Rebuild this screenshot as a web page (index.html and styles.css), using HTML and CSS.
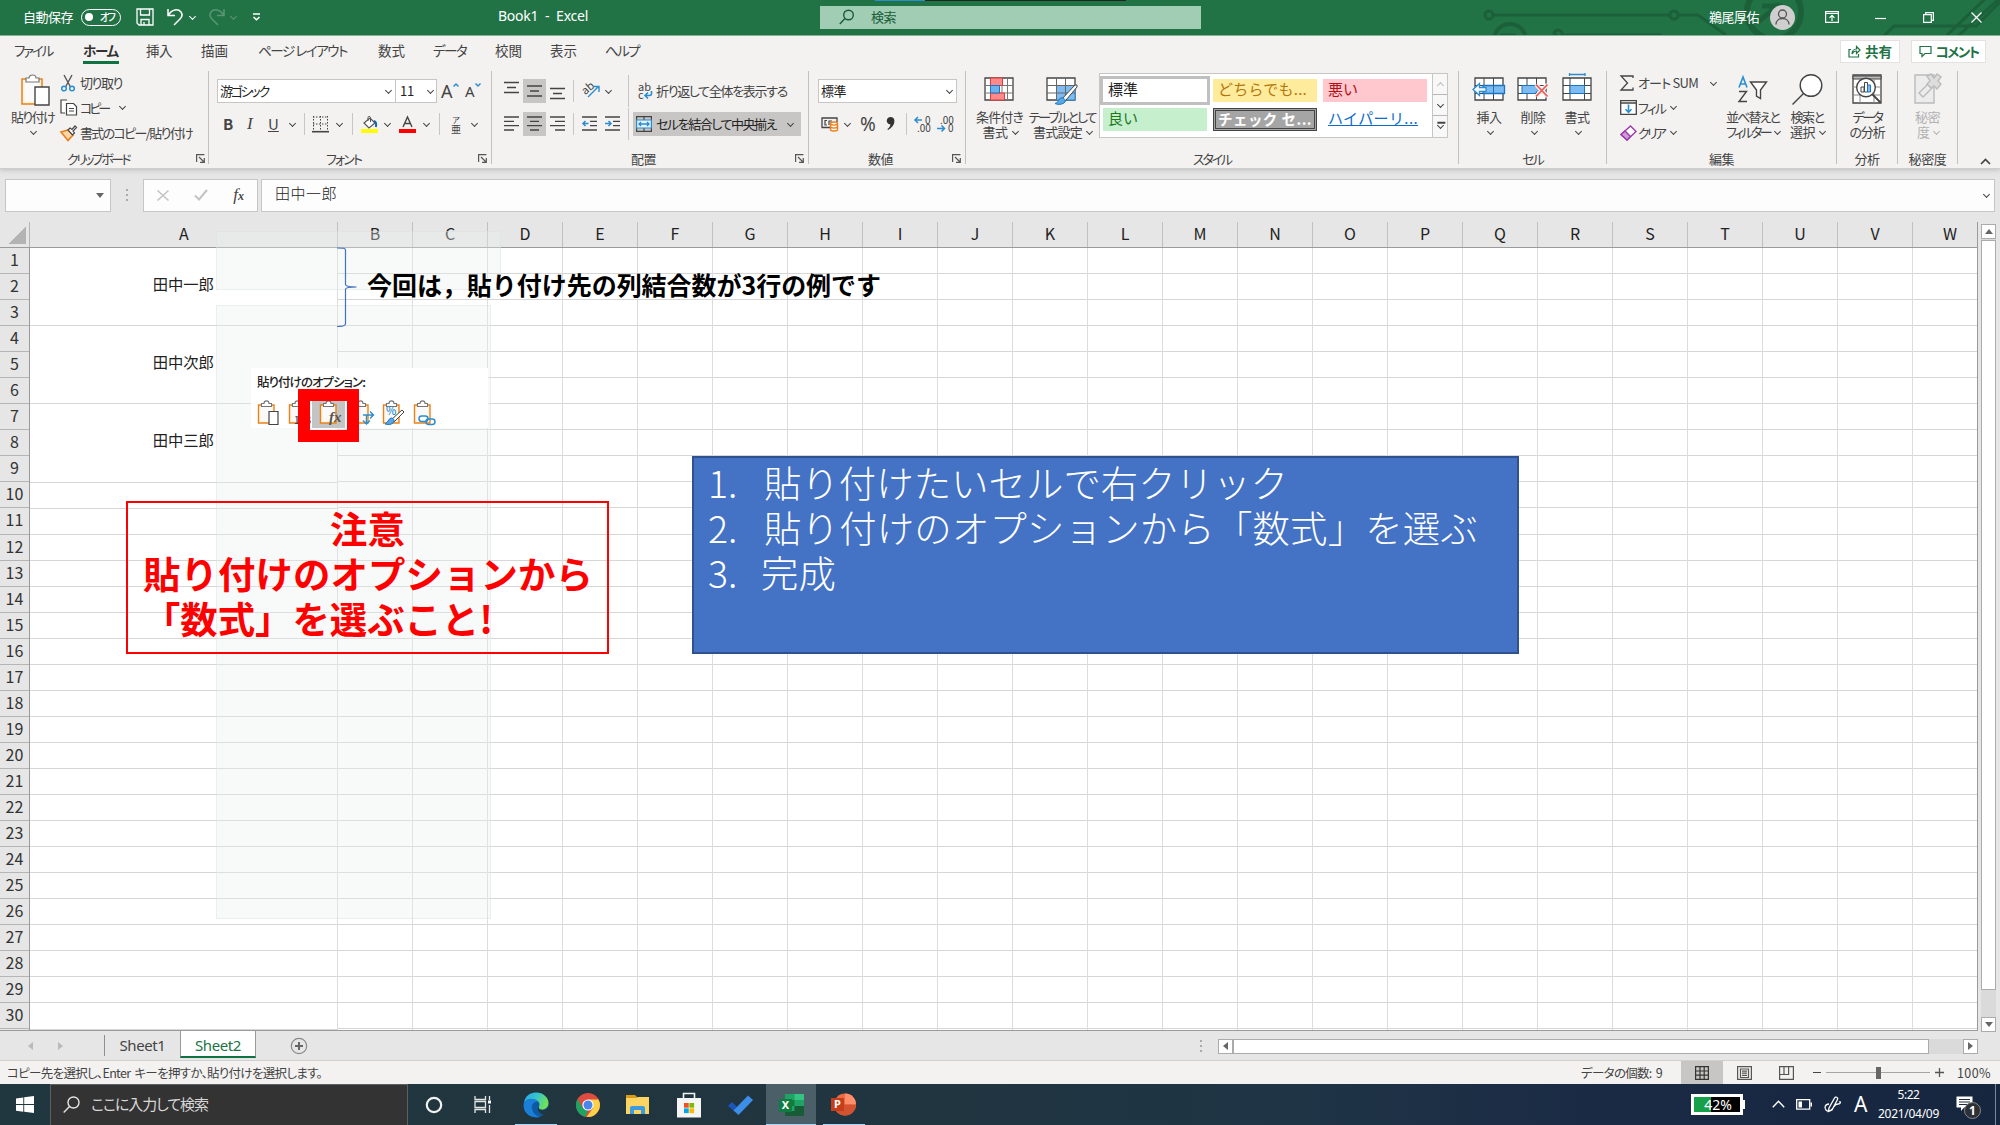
FILE: index.html
```html
<!DOCTYPE html>
<html lang="ja">
<head>
<meta charset="utf-8">
<title>Book1 - Excel</title>
<link rel="stylesheet" href="styles.css">
</head>
<body>
<header class="title">
  <svg class="circuit" width="560" height="35" viewBox="0 0 560 35" fill="none" stroke="#1c6039" stroke-width="3"><circle cx="49" cy="15" r="4"/><path d="M53 15H230M238 15h20l28 20M118 35h-3"/><circle cx="234" cy="15" r="4"/><circle cx="118" cy="34" r="4"/><path d="M122 35h100"/><circle cx="70" cy="40" r="16" stroke-width="4"/><path d="M60 35h16"/><circle cx="334" cy="12" r="27" stroke-width="6"/><path d="M318 22l22-18M322 6h18v14" stroke-width="5"/><path d="M444 36l10-10h82l26-26M506 36l40-38M518 36l42-38"/></svg>
  <span data-w="50">自動保存</span>
  <span class="toggle"><i></i><b data-w="14">オフ</b></span>
  <svg width="18" height="18" viewBox="0 0 18 18" fill="none" stroke="#fff" stroke-width="1.3"><path d="M1 1h16v16H3l-2-2zM4.500 1v6h9V1M5 17v-5.500h8V17M8 17v-3"/></svg>
  <svg width="17" height="18" viewBox="0 0 17 18" fill="none" stroke="#fff" stroke-width="1.5"><path d="M1 1v6.500h7M1.500 7C5 1 11 .5 14 4c2 3 1 5-1 7l-6 6"/></svg>
  <i class="chev"></i>
  <svg class="dim" width="17" height="18" viewBox="0 0 17 18" fill="none" stroke="#fff" stroke-width="1.500"><path d="M16 1v6.500H9M15.500 7C12 1 6 .5 3 4c-2 3-1 5 1 7l6 6"/></svg>
  <i class="chev dim"></i>
  <svg width="9" height="8" viewBox="0 0 9 8" fill="none" stroke="#fff" stroke-width="1.500"><path d="M1 1h7M1.500 4l3 2.700L7.500 4"/></svg>
  <span class="doc" data-w="90">Book1&nbsp; -&nbsp; Excel</span>
  <div class="search"><svg width="16" height="16" viewBox="0 0 16 16" fill="none" stroke="#1b5c38" stroke-width="1.400"><circle cx="9.500" cy="6" r="4.800"/><path d="M6 9.500L.8 15"/></svg><span data-w="25">検索</span></div>
  <span data-w="50">鵜尾厚佑</span>
  <svg width="25" height="25" viewBox="0 0 25 25" fill="none" stroke="#555" stroke-width="1.300"><circle cx="12.500" cy="12.500" r="12.500" fill="#cfcfcf" stroke="none"/><circle cx="12.500" cy="9" r="4"/><path d="M6 19.500c0-8 13-8 13 0"/></svg>
  <svg width="14" height="12" viewBox="0 0 14 12" fill="none" stroke="#fff" stroke-width="1.200"><path d="M.6.600h12.800v10.800H.6zM.6 2.500h12.800M7 10V4.500M4.500 6.800L7 4.300l2.500 2.500"/></svg>
  <svg width="11" height="11" viewBox="0 0 11 11" stroke="#fff" stroke-width="1.200"><path d="M0 6.500h11"/></svg>
  <svg width="11" height="11" viewBox="0 0 11 11" fill="none" stroke="#fff" stroke-width="1.200"><path d="M.6 2.700h7.700v7.700H.6zM2.700 2.700V.6h7.700v7.700H8.300"/></svg>
  <svg width="11" height="11" viewBox="0 0 11 11" stroke="#fff" stroke-width="1.300"><path d="M.5.500l10 10M10.500.500l-10 10"/></svg>
</header>

<section class="ribbon">
  <nav class="tabs">
    <span data-w="38">ファイル</span><b data-w="35">ホーム</b><span data-w="26">挿入</span><span data-w="27">描画</span><span data-w="89">ページ レイアウト</span><span data-w="27">数式</span><span data-w="33">データ</span><span data-w="27">校閲</span><span data-w="27">表示</span><span data-w="34">ヘルプ</span>
    <div class="action share"><svg width="13" height="13" viewBox="0 0 13 13" fill="none" stroke="#217346" stroke-width="1.200"><path d="M3 4.500H1V12h9.500V9M4 9c0-3 2-5 4.500-5V1.500L12 5 8.500 8.500V6C6.500 6 5 7 4 9z"/></svg><b data-w="27">共有</b></div>
    <div class="action"><svg width="13" height="13" viewBox="0 0 13 13" fill="none" stroke="#217346" stroke-width="1.200"><path d="M1 1.500h11v7H6l-3 3v-3H1z"/></svg><b data-w="43">コメント</b></div>
  </nav>
  <div class="groups">
    <div class="group g-clip">
      <div class="body">
        <div class="big"><svg width="30" height="33" viewBox="0 0 30 33" fill="none"><path d="M2 5h20v25H2z" fill="#fff2d6" stroke="#e8821e" stroke-width="1.500"/><path d="M4.500 7.500h15v20h-15z" fill="#fafafa"/><path d="M6 8V4h3c0-4 7-4 7 0h3v4z" fill="#fff" stroke="#767676" stroke-width="1.200"/><path d="M15 13h14v18H15z" fill="#fff" stroke="#444" stroke-width="1.400"/></svg><span data-w="43">貼り付け</span><i class="chev"></i></div>
        <div class="stack clip-stack">
          <div><svg width="16" height="17" viewBox="0 0 16 17" fill="none"><path d="M4 0l6.500 12M12 0L5.500 12" stroke="#555" stroke-width="1.400"/><circle cx="4" cy="13.500" r="2.300" stroke="#2b8dd0" stroke-width="1.500"/><circle cx="12" cy="13.500" r="2.300" stroke="#2b8dd0" stroke-width="1.500"/></svg><span data-w="42">切り取り</span></div>
          <div><svg width="18" height="17" viewBox="0 0 18 17" fill="#fff" stroke="#444" stroke-width="1.200"><path d="M5 14H1V1h6"/><path d="M6.500 4.500h7l3 3V16h-10z"/><path d="M9 9.500h5M9 12h5"/></svg><span data-w="28">コピー</span><i class="chev"></i></div>
          <div><svg width="17" height="16" viewBox="0 0 17 16" fill="none"><path d="M1 7l7-2 5 5-5 5.500z" fill="#fbd7a8" stroke="#e8821e" stroke-width="1.700"/><path d="M8 5l2-2 2 1.500L15 1l1.500 1.500L13 6l1.500 2-2 2z" fill="#fff" stroke="#444" stroke-width="1.200"/></svg><span data-w="112">書式のコピー/貼り付け</span></div>
        </div>
      </div>
      <div class="label"><span data-w="62">クリップボード</span><svg class="launch" viewBox="0 0 9 9"><path d="M.6 8V.6h7.800M3 3l5 5M8.300 4v4.300H4"/></svg></div>
    </div>
    <div class="group g-font">
      <div class="body rows">
        <div class="font-row1"><span class="field"><span data-w="48">游ゴシック</span><i class="chev"></i></span><span class="field size"><span data-w="14">11</span><i class="chev"></i></span><span class="grow">A<svg width="6" height="4" viewBox="0 0 6 4"><path d="M.5 3.500L3 1l2.500 2.500"/></svg></span><span class="grow small">A<svg width="6" height="4" viewBox="0 0 6 4"><path d="M.5.500L3 3 5.500.500"/></svg></span></div>
        <div class="font-row2"><b>B</b><em>I</em><u>U</u><i class="chev"></i><i class="sep"></i><svg width="17" height="17" viewBox="0 0 17 17" stroke="#444"><path d="M1 1h15M1 8h15M1.500 0v15M8.500 0v15M15.500 0v15" stroke-dasharray="1.500 1.500"/><path d="M0 15.700h17" stroke-width="1.600"/></svg><i class="chev"></i><i class="sep"></i><svg width="17" height="17" viewBox="0 0 17 17" fill="none"><path d="M3 7l6-5 5 5-6 5z" fill="#fff" stroke="#555" stroke-width="1.200"/><path d="M7 5V1.500c0-1.500 2-1.500 2.500 0V6" stroke="#555"/><path d="M13 5q3 1 1.800 6" stroke="#1667b0" stroke-width="2"/><path d="M0 13h17v4H0z" fill="#ff0"/></svg><i class="chev"></i><svg width="17" height="17" viewBox="0 0 17 17"><path d="M4 11L8.500 1 13 11M5.500 7.500h6" fill="none" stroke="#444" stroke-width="1.400"/><path d="M0 13h17v4H0z" fill="red"/></svg><i class="chev"></i><i class="sep"></i><span class="ruby"><small>ア</small>亜</span><i class="chev"></i></div>
      </div>
      <div class="label"><span data-w="35">フォント</span><svg class="launch" viewBox="0 0 9 9"><path d="M.6 8V.6h7.800M3 3l5 5M8.300 4v4.300H4"/></svg></div>
    </div>
    <div class="group g-align">
      <div class="body rows">
        <div class="align-row"><svg class="ln high" viewBox="0 0 15 16"><path d="M0 1.500h15M3 6.500h9M0 11.500h15"/></svg><span class="on"><svg class="ln" viewBox="0 0 15 16"><path d="M0 3h15M3 8h9M0 13h15"/></svg></span><svg class="ln low" viewBox="0 0 15 16"><path d="M0 3.500h15M3 8.500h9M0 13.500h15"/></svg><i class="sep"></i><svg class="orient" width="18" height="17" viewBox="0 0 18 17" fill="none" stroke="#2b8dd0" stroke-width="1.400"><text x="0" y="11" transform="rotate(-40 6 8)" font-size="11" fill="#444" stroke="none">ab</text><path d="M6 16L16 6M11.500 5.500H17V11"/></svg><i class="chev"></i><i class="sep tall"></i><span class="wrap"><svg width="15" height="17" viewBox="0 0 15 17"><text x="0" y="8" font-size="11" fill="#444">ab</text><text x="0" y="16" font-size="11" fill="#444">c</text><path d="M13.500 8v2.500q0 2-2 2H7.500M10 9.500l-3 3 3 3" fill="none" stroke="#2b8dd0" stroke-width="1.600"/></svg><span data-w="131">折り返して全体を表示する</span></span></div>
        <div class="align-row second"><svg class="ln" viewBox="0 0 15 16"><path d="M0 1h15M0 5.300h10M0 9.600h15M0 14h10"/></svg><span class="on"><svg class="ln" viewBox="0 0 15 16"><path d="M0 1h15M3 5.300h9M0 9.600h15M3 14h9"/></svg></span><svg class="ln" viewBox="0 0 15 16"><path d="M0 1h15M5 5.300h10M0 9.600h15M5 14h10"/></svg><i class="sep"></i><svg class="ln" viewBox="0 0 15 16"><path d="M0 1h15M8 5.300h7M8 9.600h7M0 14h15"/><path class="blue" d="M6.500 7.500H1M3.500 5L1 7.500 3.500 10"/></svg><svg class="ln" viewBox="0 0 15 16"><path d="M0 1h15M8 5.300h7M8 9.600h7M0 14h15"/><path class="blue" d="M0 7.500h6M3.500 5L6 7.500 3.500 10"/></svg><i class="sep tall"></i><span class="merge"><svg width="16" height="16" viewBox="0 0 16 16" fill="none" stroke="#444" stroke-width="1.200"><path d="M.6.600h14.800v14.800H.6zM8 .6V4M8 12v3.400"/><path d="M.6 4h14.800v8H.6z" fill="#e7f2fb" stroke="#2b8dd0"/><path d="M3 8h10M5 6L3 8l2 2M11 6l2 2-2 2" stroke="#2b8dd0" stroke-width="1.400"/></svg><span data-w="120">セルを結合して中央揃え</span><i class="chev"></i></span></div>
      </div>
      <div class="label"><span data-w="25">配置</span><svg class="launch" viewBox="0 0 9 9"><path d="M.6 8V.6h7.800M3 3l5 5M8.300 4v4.300H4"/></svg></div>
    </div>
    <div class="group g-num">
      <div class="body rows">
        <span class="field"><span data-w="25">標準</span><i class="chev"></i></span>
        <div class="num-row"><svg width="18" height="16" viewBox="0 0 18 16" fill="none"><path d="M9 11.500H1V2h15v4" stroke="#444" stroke-width="1.300"/><path d="M6 4.500H4v4.500h2M8 9V5h3" stroke="#444" stroke-width="1.200"/><path d="M9.500 7.500c0-2 7-2 7 0v6c0 2-7 2-7 0z" fill="#fff" stroke="#e8821e" stroke-width="1.400"/><path d="M9.500 8c1 1.500 6 1.500 7 0M9.500 11c1 1.500 6 1.500 7 0" stroke="#e8821e" stroke-width="1.400"/></svg><i class="chev"></i><span class="pct">%</span><svg width="10" height="16" viewBox="0 0 10 16"><path d="M5 1c5 0 5 9-3 13l-.6-1c2-1.500 3-3 3-4.500C-.5 8-.5 1 5 1z" fill="#333"/></svg><i class="sep"></i><svg class="dec" viewBox="0 0 17 17"><text x="11" y="7.500">0</text><text x="3" y="16">.00</text><path d="M8 4H1M4 1L1 4l3 3"/></svg><svg class="dec" viewBox="0 0 17 17"><text x="3" y="7.500">.00</text><text x="11" y="16">0</text><path d="M0 12.500h7.500M4.500 9.500l3 3-3 3"/></svg></div>
      </div>
      <div class="label"><span data-w="25">数値</span><svg class="launch" viewBox="0 0 9 9"><path d="M.6 8V.6h7.800M3 3l5 5M8.300 4v4.300H4"/></svg></div>
    </div>
    <div class="group g-style">
      <div class="body">
        <div class="big two"><svg width="31" height="33" viewBox="0 0 31 33" fill="none" stroke="#444"><path d="M1 5h28v22H1z" fill="#fff" stroke-width="1.300"/><path d="M1 12.500h28M1 20h28M6.500 5v22M23.500 5v22M18 5v22" stroke="#777"/><path d="M6.500 5h12v7.500h-12zM6.500 20h14v7h-14zM15.500 12.500h-2" fill="#ff8a8a" stroke="#e23b3b"/><path d="M6.500 12.500h9V20h-9z" fill="#6cb2ec" stroke="#1b75c4"/></svg><span data-w="47">条件付き</span><span class="l2"><span data-w="25">書式</span><i class="chev"></i></span></div>
        <div class="big two"><svg width="32" height="33" viewBox="0 0 32 33" fill="none" stroke="#444"><path d="M1 5h28v22H1z" fill="#fff" stroke-width="1.300"/><path d="M10.500 12.500H29V27H10.500z" fill="#7dbbf0" stroke="#2b8dd0"/><path d="M1 12.500h28M1 20h28M10.500 5v22M19.500 5v22" stroke="#666"/><path d="M29 12L15 27l3 2.500L31 14q1-3-2-2z" fill="#fff"/><path d="M15 25c3-1 6 3 3 5-3 2-7 1.500-9 .5 4-1 3-5 6-5.500z" fill="#5aa7e6" stroke="#1b75c4"/></svg><span data-w="67">テーブルとして</span><span class="l2"><span data-w="49">書式設定</span><i class="chev"></i></span></div>
        <div class="gallery">
          <span class="sel">標準</span><span class="neutral"><span data-w="89">どちらでも...</span></span><span class="bad">悪い</span>
          <span class="good">良い</span><span class="check"><span data-w="94">チェック セ...</span></span><span class="link"><u data-w="90">ハイパーリ...</u></span>
        </div>
        <div class="spin"><i class="chev up"></i><i class="chev"></i><i class="chev bar"></i></div>
      </div>
      <div class="label"><span data-w="38">スタイル</span></div>
    </div>
    <div class="group g-cells">
      <div class="body">
        <div class="big"><svg width="34" height="33" viewBox="0 0 34 33" fill="none" stroke="#444"><path d="M3 5h28v22H3z" fill="#fff" stroke-width="1.300"/><path d="M12 5v22M21.500 5v22M3 12.500h28M3 20.500h28"/><path d="M11 12.500h21.500v8H11z" fill="#7dbbf0" stroke="#1b75c4" stroke-width="1.300"/><path d="M21.500 12.500v8" stroke="#1b75c4"/><path d="M1 16.500l6.500-6v4H14v4H7.500v4z" fill="#f3f9fe" stroke="#2b8dd0" stroke-width="1.300"/></svg><span data-w="25">挿入</span><i class="chev"></i></div>
        <div class="big"><svg width="32" height="33" viewBox="0 0 32 33" fill="none" stroke="#444"><path d="M1 5h28v22H1z" fill="#fff" stroke-width="1.300"/><path d="M10 5v22M19.500 5v22M1 12.500h28M1 20.500h28"/><path d="M5 12.500h13l4 4-4 4H5z" fill="#7dbbf0" stroke="#1b75c4"/><path d="M19 11.500l11.500 12M30.500 11.500L19 23.500" stroke="#f3f2f1" stroke-width="4"/><path d="M19 11.500l11.500 12M30.500 11.500L19 23.500" stroke="#ee5a55" stroke-width="1.800"/></svg><span data-w="25">削除</span><i class="chev"></i></div>
        <div class="big"><svg width="31" height="33" viewBox="0 0 31 33" fill="none" stroke="#444"><path d="M1 5h28v22H1z" fill="#fff" stroke-width="1.300"/><path d="M8 5v22M22.500 5v22M1 12.500h28M1 20.500h28"/><path d="M8 12.500h14.500v8H8z" fill="#7dbbf0" stroke="#1b75c4"/><path d="M7.500 1.500h15.500M7.500 0v3M23 0v3" stroke="#2b8dd0" stroke-width="1.300"/></svg><span data-w="25">書式</span><i class="chev"></i></div>
      </div>
      <div class="label"><span data-w="21">セル</span></div>
    </div>
    <div class="group g-edit">
      <div class="body">
        <div class="stack edit-stack">
          <div><svg width="14" height="16" viewBox="0 0 14 16" fill="none" stroke="#444" stroke-width="1.300"><path d="M13 3V1H1l6.500 7L1 15h12v-2.500"/></svg><span data-w="60">オート SUM</span><i class="chev far"></i></div>
          <div><svg width="17" height="15" viewBox="0 0 17 15" fill="#fff" stroke="#444" stroke-width="1.300"><path d="M.7.700h15.600v13.600H.7zM.7 3h15.600"/><path d="M8.500 4.500v7.500M5.500 9.300l3 3 3-3" fill="none" stroke="#2b8dd0" stroke-width="1.600"/></svg><span data-w="27">フィル</span><i class="chev"></i></div>
          <div><svg width="17" height="16" viewBox="0 0 17 16" fill="#fff" stroke="#9b3aa8" stroke-width="1.400"><path d="M1 9.500L10.500 1 16 6.500 7 15z"/><path d="M1 9.500L5 6l5.500 5.500L7 15z" fill="#cf9bd6"/></svg><span data-w="26">クリア</span><i class="chev"></i></div>
        </div>
        <div class="big two"><svg width="31" height="33" viewBox="0 0 31 33" fill="none"><path d="M2 14.500L6 4l4 10.500M3.500 11h5" stroke="#2b8dd0" stroke-width="1.600"/><path d="M2 18.500h7.500L2 28.500h8" stroke="#444" stroke-width="1.400"/><path d="M13.500 9h16l-6 8v8.500l-4-2.500v-6z" stroke="#444" stroke-width="1.400" fill="#fff"/></svg><span data-w="53">並べ替えと</span><span class="l2"><span data-w="44">フィルター</span><i class="chev"></i></span></div>
        <div class="big two"><svg width="32" height="33" viewBox="0 0 32 33" fill="#fff" stroke="#444" stroke-width="1.400"><circle cx="20" cy="12.500" r="10.800"/><path d="M12.500 20.500L1.500 31.500"/></svg><span data-w="33">検索と</span><span class="l2"><span data-w="25">選択</span><i class="chev"></i></span></div>
      </div>
      <div class="label"><span data-w="25">編集</span></div>
    </div>
    <div class="group g-anal">
      <div class="body">
        <div class="big two"><svg width="30" height="33" viewBox="0 0 30 33" fill="none" stroke="#444"><path d="M1 2h28v28H1z" fill="#fff" stroke-width="1.300"/><path d="M1 3h28v3H1z" fill="#bbb"/><path d="M1 14h28M1 22h28M8 6v24M22 6v24" stroke="#888"/><circle cx="14" cy="14.500" r="9.300" fill="#fff" stroke-width="1.400"/><path d="M20.500 21.500l8 8" stroke-width="1.800"/><path d="M9 14h3v5H9zM12.500 9.500h3V19h-3z" fill="#fff"/><path d="M15.500 12h3v7h-3z" fill="#7dbbf0" stroke="#1b75c4"/></svg><span data-w="29">データ</span><span class="l2"><span data-w="35">の分析</span></span></div>
      </div>
      <div class="label"><span data-w="25">分析</span></div>
    </div>
    <div class="group g-sens">
      <div class="body">
        <div class="big two off"><svg width="30" height="33" viewBox="0 0 30 33" fill="#ececec" stroke="#bbb" stroke-width="1.400"><path d="M2 2h19v28H2z"/><path d="M6 20l9-9 4 4-9 9z"/><path d="M14 3l4-2 3 4 3-4 4 3-3 4 3 3-4 5-3-3-3 2-4-4 3-3z" fill="#ddd"/></svg><span data-w="25">秘密</span><span class="l2"><span data-w="12">度</span><i class="chev"></i></span></div>
      </div>
      <div class="label"><span data-w="38">秘密度</span></div>
    </div>
    <svg class="collapse" width="11" height="7" viewBox="0 0 11 7" fill="none" stroke="#444" stroke-width="1.700"><path d="M1 6l4.500-4.500L10 6"/></svg>
  </div>
</section>

<section class="formula">
  <div class="box name"><i class="tri down"></i></div>
  <div class="dots"><i></i><i></i><i></i></div>
  <div class="box tools"><svg width="12" height="11" viewBox="0 0 12 11" stroke="#c3c3c3" stroke-width="1.600"><path d="M.5.500l11 10M11.500.500L.5 10.500"/></svg><svg width="14" height="12" viewBox="0 0 14 12" fill="none" stroke="#c3c3c3" stroke-width="2"><path d="M1 6.500l4 4L13 1"/></svg><span class="fx">f<small>x</small></span></div>
  <div class="box value"><span data-w="62">田中一郎</span><i class="chev"></i></div>
</section>

<main class="work">
  <div class="sheet" id="sheet">
    <div class="colheads" id="colheads"><span class="corner"></span></div>
    <div class="cells" id="cells"><div class="rownums" id="rownums"></div></div>
  </div>
  <div class="vscroll"><span><i class="tri up"></i></span><b></b><span class="end"><i class="tri down"></i></span></div>

  <div class="ghost one"></div>
  <div class="ghost two-g"></div>
  <svg class="brace" width="20" height="81" viewBox="0 0 20 81" fill="none" stroke="#4472c4" stroke-width="1.200"><path d="M0 1c6 0 8.500 0 8.500 2v34.500c0 2 4 2.500 11 2.500-7 0-11 .5-11 2.500V77c0 2-3 2.500-8.500 2.500"/></svg>
  <p class="note" data-w="514">今回は，貼り付け先の列結合数が3行の例です</p>
  <div class="paste">
    <span data-w="108">貼り付けのオプション:</span>
    <div class="opts">
      <svg viewBox="0 0 24 26"><use href="#clip"/><path d="M12 11.500h9v13h-9z" fill="#fff" stroke="#444" stroke-width="1.200"/></svg>
      <svg viewBox="0 0 24 26"><use href="#clip"/><text x="6" y="24" font-size="10" fill="#444">123</text></svg>
      <span class="chosen"><svg viewBox="0 0 24 26"><use href="#clip"/><text class="f" x="10" y="22">fx</text></svg></span>
      <svg viewBox="0 0 24 26"><use href="#clip"/><path d="M12 15h10M19 11.500l3.500 3.500-3.500 3.500M15.500 15v9M12 20.500l3.500 3.500 3.500-3.500" fill="none" stroke="#2b8dd0" stroke-width="1.400"/></svg>
      <svg viewBox="0 0 24 26"><use href="#clip"/><text x="4" y="15" font-size="11" fill="#2b8dd0">%</text><path d="M20 10L9 20l3 2L22 12z" fill="#fff" stroke="#444"/><path d="M9 18c3 0 4 3 2 5s-6 1.500-8 1c3-1 3-5 6-6z" fill="#5aa7e6" stroke="#1b75c4"/></svg>
      <svg viewBox="0 0 24 26"><use href="#clip"/><g fill="none" stroke="#2b8dd0" stroke-width="1.500"><rect x="6" y="16" width="9" height="5.500" rx="2.700"/><rect x="13" y="19" width="9" height="5.500" rx="2.700"/></g></svg>
    </div>
  </div>
  <div class="redframe"></div>
  <div class="caution"><p class="c" data-w="75">注意</p><p data-w="450">貼り付けのオプションから</p><p data-w="350">「数式」を選ぶこと!</p></div>
  <div class="steps">
    <p><span>1.</span><span data-w="524">貼り付けたいセルで右クリック</span></p>
    <p><span>2.</span><span data-w="714">貼り付けのオプションから「数式」を選ぶ</span></p>
    <p class="last"><span>3.</span><span data-w="75">完成</span></p>
  </div>
</main>

<section class="sheetbar">
  <i class="tri left"></i><i class="tri right"></i><i class="rule"></i>
  <span class="tab"><span data-w="46">Sheet1</span></span><span class="tab cur"><span data-w="46">Sheet2</span></span>
  <svg width="18" height="18" viewBox="0 0 18 18" fill="none" stroke="#8a8a8a"><circle cx="9" cy="9" r="7.700" stroke-width="1.200"/><path d="M9 5v8M5 9h8" stroke="#666" stroke-width="2"/></svg>
  <div class="dots"><i></i><i></i><i></i></div>
  <div class="hscroll"><span><i class="tri left"></i></span><b></b><span class="end"><i class="tri right"></i></span></div>
</section>

<section class="status">
  <span data-w="315">コピー先を選択し、Enter キーを押すか、貼り付けを選択します。</span>
  <span data-w="81">データの個数: 9</span>
  <span class="view on"><svg width="14" height="14" viewBox="0 0 14 14" fill="none" stroke="#333" stroke-width="1.200"><path d="M.6.600h12.800v12.800H.6zM5 0v14M9.200 0v14M0 5h14M0 9.200h14"/></svg></span>
  <span class="view"><svg width="15" height="14" viewBox="0 0 15 14" fill="none" stroke="#555" stroke-width="1.200"><path d="M.6.600h13.800v12.800H.6zM3.500 3h8v8.500h-8zM5 5.200h5M5 7.200h5M5 9.300h5"/></svg></span>
  <span class="view"><svg width="15" height="14" viewBox="0 0 15 14" fill="none" stroke="#555" stroke-width="1.200"><path d="M.6.600h13.800v12.800H.6zM.6 8.500h9V.6M5 .6v7.900"/></svg></span>
  <span class="zoom"><i class="minus"></i><i class="track"><b></b></i><svg width="9" height="9" viewBox="0 0 9 9" stroke="#555" stroke-width="1.300"><path d="M0 4.500h9M4.500 0v9"/></svg></span>
  <span data-w="34">100%</span>
</section>

<footer class="taskbar">
  <span class="start"><svg width="18" height="17" viewBox="0 0 18 17" fill="#fff"><path d="M0 2.400L7.300 1.400V8H0zM8.200 1.200L18 0v8H8.200zM0 9h7.300v6.700L0 14.700zM8.200 9H18v8l-9.800-1.300z"/></svg></span>
  <div class="tsearch"><svg width="17" height="17" viewBox="0 0 17 17" fill="none" stroke="#e4e4e4" stroke-width="1.400"><circle cx="10.500" cy="6.500" r="5.500"/><path d="M6.500 10.500L.7 16.500"/></svg><span data-w="117">ここに入力して検索</span></div>
  <span class="app"><svg width="18" height="18" viewBox="0 0 18 18"><circle cx="9" cy="9" r="7.200" fill="none" stroke="#f1f1f1" stroke-width="2.200"/></svg></span>
  <span class="app"><svg width="18" height="17" viewBox="0 0 18 17" fill="none" stroke="#e4e4e4" stroke-width="1.300"><path d="M1 0v3.500h10.500V0M1 5.500h10.500v6H1zM1 17v-3.500h10.500V17M15.500 0v4M15.500 9v8"/><path d="M14 4.500h3v3h-3z" fill="#fff" stroke="none"/></svg></span>
  <span class="app run"><svg width="26" height="26" viewBox="0 0 26 26"><defs><linearGradient id="edge" x1="0" x2="1" y1="0" y2=".4"><stop stop-color="#2ba6e8"/><stop offset=".5" stop-color="#33c3cf"/><stop offset="1" stop-color="#6fe05a"/></linearGradient></defs><circle cx="13" cy="13" r="12.500" fill="#0c59a4"/><path d="M1 11C2 4 7 .5 13 .5c7 0 12.500 5 12.500 10.500 0 4-3 6.500-6.500 6.500-3 0-4-1.500-3-3C18 11 14 7 9 7S2 9 1 11z" fill="url(#edge)"/><path d="M1 11c3-6 12-5 14-1-4-1-7 3-6 7s4 7 8 8C7 27-1 20 1 11z" fill="#1b7fd8"/><path d="M16 14c-1 2 0 4 4 4 2 0 4-1 5-3l.5 5-3 3c-5 0-10-5-6.500-9z" fill="#213742"/></svg></span>
  <span class="app"><svg width="24" height="24" viewBox="0 0 24 24"><circle cx="12" cy="12" r="12" fill="#de4b3f"/><path d="M1.600 6l5.200 9L12 17.500 9.500 23.800A12 12 0 0 1 1.600 6z" fill="#1da362"/><path d="M22.500 6.500H12l5 8.500-6.500 9A12 12 0 0 0 22.500 6.500z" fill="#fdd04a"/><circle cx="12" cy="12" r="5.600" fill="#fff"/><circle cx="12" cy="12" r="4.500" fill="#4a86ee"/></svg></span>
  <span class="app"><svg width="23" height="20" viewBox="0 0 23 20"><path d="M0 0h9l2 2H22v4H0z" fill="#dd9a14"/><path d="M0 3h11l1-1h11v17H0z" fill="#fcd462"/><path d="M4 19v-6q0-2 2-2h11q2 0 2 2v6h-4v-4H8v4z" fill="#3d9ae0"/></svg></span>
  <span class="app"><svg width="24" height="26" viewBox="0 0 24 26"><path d="M6.500 7V1.500h11V7" fill="none" stroke="#f2f2f2" stroke-width="1.600"/><path d="M0 6h24v19.500H0z" fill="#f5f5f5"/><path d="M7 11h4.700v4.700H7z" fill="#f25022"/><path d="M12.400 11h4.700v4.700h-4.700z" fill="#7fba00"/><path d="M7 16.400h4.700v4.700H7z" fill="#00a4ef"/><path d="M12.400 16.400h4.700v4.700h-4.700z" fill="#ffb900"/></svg></span>
  <span class="app"><svg width="25" height="20" viewBox="0 0 25 20"><path d="M0 11l4-4 7 7-4.500 2.500z" fill="#1c55b8"/><path d="M5.500 15.500L20 .5l5 4.500L10.500 20z" fill="#3d8ee8"/></svg></span>
  <span class="app run wide"><svg width="25" height="22" viewBox="0 0 25 22"><path d="M6 0h19v22H6z" fill="#21a366"/><path d="M15.500 0H25v6h-9.500z" fill="#33c481"/><path d="M6 6h9.500v6H6z" fill="#107c41"/><path d="M15.500 12H25v10H6v-5h9.500z" fill="#185c37"/><path d="M0 5h13v13H0z" fill="#107c41"/><text x="6.500" y="15.300">X</text></svg></span>
  <span class="app run"><svg width="25" height="23" viewBox="0 0 25 23"><circle cx="14" cy="11.500" r="11" fill="#ed6c47"/><path d="M14 .5a11 11 0 0 1 11 11H14z" fill="#ff8f6b"/><path d="M3 11.500h22a11 11 0 0 1-22 0z" fill="#d35230"/><path d="M0 5h13v13H0z" fill="#c43e1c"/><text x="6.500" y="15.300">P</text></svg></span>
  <div class="tray">
    <span class="battery">42%</span>
    <svg width="13" height="8" viewBox="0 0 13 8" fill="none" stroke="#fff" stroke-width="1.400"><path d="M.8 7.200L6.500 1.300l5.700 5.900"/></svg>
    <svg width="16" height="11" viewBox="0 0 16 11" fill="none" stroke="#fff" stroke-width="1.300"><path d="M.7.700h13v9.500H.7z"/><path d="M14.500 3.500h1.500v4h-1.500zM2.500 2.500h3.500v6H2.500z" fill="#fff" stroke="none"/></svg>
    <svg width="17" height="17" viewBox="0 0 17 17" fill="none" stroke="#fff" stroke-width="1.300"><path d="M5 12L10.500 2c1-2 4-.500 3 1.500L8 14l-3.500 1.500zM5 8c-4 0-5 4-3 6s5 1 7-2 2-4 5-4 3-3 1-2"/></svg>
    <span class="ime">A</span>
    <span class="clock"><span data-w="22">5:22</span><span data-w="61">2021/04/09</span></span>
    <span class="notif"><svg width="18" height="16" viewBox="0 0 18 16"><path d="M.5.500h16v11H8L5 15v-3.500H.5z" fill="#fff"/><path d="M3 3.500h11M3 6h11M3 8.500h11" stroke="#1c2b40"/></svg><b>1</b></span>
  </div>
</footer>

<svg width="0" height="0" class="defs"><defs><g id="clip"><path d="M1.500 5h15.500v18H1.500z" fill="#fff7e6" stroke="#e8821e" stroke-width="1.400"/><path d="M4 7h10.500v13.500H4z" fill="#fafafa"/><path d="M4.500 6.500V3.500H7c0-3.500 5-3.500 5 0h2.500v3z" fill="#fff" stroke="#767676" stroke-width="1.100"/></g></defs></svg>
<script src="script.js"></script>
</body>
</html>
```
FILE: styles.css
```css
* { box-sizing: border-box; }
body {
  margin: 0; width: 2000px; height: 1125px; overflow: hidden;
  display: flex; flex-direction: column;
  font-size: 13px; line-height: 16px;
  font-family: "Noto Sans CJK JP", "Noto Sans", sans-serif;
  font-feature-settings: "palt"; color: #444; background: #e6e6e6;
}
p { margin: 0; }
svg { display: block; flex: none; overflow: visible; }
[data-w] { display: block; white-space: nowrap; }
.defs { position: absolute; }

.chev { display: block; width: 5px; height: 5px; border: solid #444; border-width: 0 1.500px 1.500px 0; transform: translate(1px, -1px) rotate(45deg); flex: none; }
.tri { display: block; width: 0; height: 0; border: 4px solid transparent; }
.tri.down { border-top: 5px solid #666; border-bottom: 0; }
.tri.up { border-bottom: 5px solid #666; border-top: 0; }
.tri.left { border-right: 5px solid #666; border-left: 0; }
.tri.right { border-left: 5px solid #666; border-right: 0; }
.sep { width: 1px; height: 22px; background: #c8c6c4; }
.dots { display: flex; flex-direction: column; gap: 3px; }
.dots i { width: 2px; height: 2px; background: #aaa; }

/* Title bar */
.title {
  position: relative; flex: none; height: 36px; padding: 0 0 1px 23px; color: #fff; background: #217346; border-bottom: 1px solid #86b499;
  display: grid; align-items: center;
  grid-template-columns: 58px 55px 31px 22px 19px 22px 22px 246px 322px 889px 61px 55px 50px 48px 48px 20px;
}
.title::before { content: ""; position: absolute; left: 875px; top: 0; width: 251px; height: 1px; background: linear-gradient(90deg, #2b8dd0 50px, #222 50px); }
.title > * { z-index: 1; }
.title .circuit { position: absolute; left: 1440px; top: 0; z-index: 0; overflow: hidden; }
.title .chev { border-color: #fff; }
.title .dim { opacity: .25; }
.toggle { display: flex; align-items: center; width: 40px; height: 17px; border: 1.500px solid #fff; border-radius: 9px; padding-left: 3px; gap: 7px; }
.toggle i { width: 8px; height: 8px; border-radius: 50%; background: #fff; }
.toggle b { font-size: 10px; font-weight: 500; }
.doc { font: 14px/18px "Noto Sans", sans-serif; margin-top: -2px; }
.search { width: 381px; height: 23px; background: #a0cdb4; color: #1b5c38; display: flex; align-items: center; gap: 16px; padding: 0 0 1px 19px; }

/* Ribbon */
.ribbon { flex: none; height: 133px; background: #f3f2f1; border-bottom: 1px solid #cfcdcb; box-shadow: 0 1px 5px #bbb; display: flex; flex-direction: column; }
.tabs {
  height: 34px; font-size: 13.500px; display: grid; align-items: center; padding: 0 0 6px 14px;
  grid-template-columns: 69px 63px 55px 57px 120px 55px 62px 55px 55px 1235px 71px 75px;
}
.tabs > b { color: #333; position: relative; }
.tabs > b::after { content: ""; position: absolute; left: 0; right: -1px; top: 19px; height: 3px; background: #107240; }
.action { display: flex; align-items: center; justify-content: center; gap: 4px; width: 75px; height: 23px; margin-top: 2px; background: #fff; border: 1px solid #e4e2e0; color: #217346; }
.share { width: 60px; }
.groups { display: flex; height: 98px; padding-top: 1px; }
.group { height: 93px; border-right: 1px solid #c3c1bf; display: flex; flex-direction: column; flex: none; }
.body { height: 79px; display: flex; flex: none; }
.label { display: flex; align-items: center; height: 17px; justify-content: center; flex: none; }
.label [data-w] { margin: 0 auto; }
.launch { width: 9px; height: 9px; margin-right: 3px; fill: none; stroke: #555; stroke-width: 1.200; }
.g-clip { width: 209px; } .g-font { width: 283px; } .g-align { width: 317px; } .g-num { width: 157px; }
.g-style { width: 493px; } .g-cells { width: 148px; } .g-edit { width: 230px; } .g-anal { width: 61px; } .g-sens { width: 60px; }
.g-font .label, .g-align .label, .g-num .label { padding-right: 1px; }
.big { display: flex; flex-direction: column; align-items: center; padding-top: 2px; }
.big > [data-w] { margin-top: 3px; height: 16px; }
.big > .chev { margin-top: 5px; }
.l2 { display: flex; align-items: center; gap: 4px; height: 16px; margin-top: -1px; }
.off { color: #b1b1b1; }
.off .chev { border-color: #b1b1b1; }
.g-clip .body { padding-left: 10px; gap: 5px; }
.g-clip .big { width: 45px; padding-top: 3px; }
.g-clip .big svg { margin-left: 4px; }
.g-clip .big > [data-w] { margin-top: 2px; }
.stack { display: grid; grid-template-rows: 24px 25px 25px; }
.stack > div { display: grid; align-items: center; }
.clip-stack > div { grid-template-columns: 20px 39px 20px; }
.rows { flex-direction: column; padding-top: 8px; gap: 9px; }
.rows > div { height: 24px; align-items: center; display: grid; grid-template-rows: 24px; }
.field { height: 24px; display: flex; align-items: center; justify-content: space-between; background: #fff; border: 1px solid #c8c6c4; padding: 0 5px 0 2px; color: #222; }
.field.size { margin-left: -1px; padding: 0 4px; }
.g-font .body { padding-left: 8px; }
.rows .font-row1 { grid-template-columns: 179px 41px 4px 24px 20px; }
.grow { display: flex; grid-column: 4; font: 18px/20px "Noto Sans", sans-serif; }
.grow.small { grid-column: 5; font-size: 15px; }
.grow svg, .blue { fill: none; stroke: #2b8dd0; stroke-width: 1.500; }
.grow svg { margin-top: 2px; }
.rows .font-row2 { grid-template-columns: 23px 22px 21px 15px 8px 24px 16px 9px 23px 15px 24px 16px 12px 20px 10px; padding-left: 6px; font-size: 15px; }
.font-row2 em { font-family: "Liberation Serif", serif; font-size: 17px; margin-left: 1px; }
.ruby { display: flex; flex-direction: column; font-size: 10px; line-height: 9px; width: 10px; align-items: center; }
.ruby small { font-size: 8px; line-height: 8px; }
.g-align .body { padding-left: 12px; }
.rows .align-row { grid-template-columns: 19px 27px 23px 9px 23px 23px 5px 170px; }
.ln { width: 15px; height: 16px; stroke: #444; stroke-width: 1.300; fill: none; }
.high { margin-top: -4px; }
.low { margin-top: 4px; }
.on { width: 23px; height: 24px; background: #c8c6c4; display: flex; align-items: center; justify-content: center; }
.orient { margin-top: -3px; }
.wrap, .merge { display: flex; align-items: center; gap: 3px; padding-left: 5px; }
.merge { height: 24px; width: 168px; background: #c8c6c4; padding-left: 3px; gap: 4px; color: #222; }
.merge .chev { margin-left: 7px; }
.sep.tall { height: 32px; margin: -4px 0; }
.g-num .body { padding: 8px 8px 0 9px; }
.rows .num-row { grid-template-columns: 23px 16px 26px 20px 8px 23px 17px; padding-left: 3px; }
.pct { font: 19px/20px "Noto Sans", sans-serif; }
.dec { width: 17px; height: 17px; fill: none; stroke: #2b8dd0; stroke-width: 1.500; }
.dec text { font: 10px "Noto Sans CJK JP", sans-serif; fill: #444; stroke: none; }
.g-style .body { padding-left: 9px; }
.g-style .big { width: 49px; }
.g-style .big:nth-child(2) { width: 76px; }
.gallery {
  width: 334px; height: 65px; margin: 2px 0 0 -1px; background: #fff; border: 1px solid #c8c6c4; padding: 5px 3px;
  display: grid; grid-template: 23px 23px / 104px 104px 104px; gap: 6px;
}
.gallery > span { padding-left: 5px; font-size: 15px; line-height: 19px; white-space: nowrap; overflow: hidden; font-feature-settings: normal; }
.gallery .sel { outline: 3px solid #c0c0c0; color: #222; }
.neutral { background: #ffeb9c; color: #b3760e; }
.bad { background: #ffc7ce; color: #b31218; }
.good { background: #c6efce; color: #1c7a1c; }
.gallery .check { background: #a5a5a5; color: #fff; font-weight: 700; border: 3px double #444; line-height: 15px; padding-left: 2px; font-size: 14.500px; }
.link { color: #0c6cc8; }
.spin { width: 15px; height: 65px; margin-top: 2px; border: 1px solid #c8c6c4; border-left: 0; display: grid; grid-template-rows: 21px 21px 21px; background: linear-gradient(#b9b7b5, #b9b7b5) 0 20px / 100% 1px no-repeat, linear-gradient(#b9b7b5, #b9b7b5) 0 41px / 100% 1px no-repeat, #f8f8f8; }
.spin i { place-self: center; }
.spin .chev { transform: translateY(-1px) rotate(45deg); }
.spin .up { transform: translateY(1px) rotate(225deg); border-color: #bbb; }
.spin .bar { position: relative; }
.spin .bar::before { content: ""; position: absolute; left: -3px; top: -1px; width: 8px; height: 1.500px; background: #444; transform: rotate(-45deg); }
.g-cells .body { padding-left: 8px; }
.g-cells .big { width: 44px; }
.g-edit .body { padding-left: 13px; }
.edit-stack { width: 105px; }
.edit-stack > div { grid-template-columns: 18px 32px 20px; }
.edit-stack .far { margin-left: 40px; }
.g-edit .big { width: 61px; margin-left: -3px; }
.g-edit .big:nth-child(3) { width: 48px; margin-left: 0; }
.g-anal .big, .g-sens .big { width: 60px; }
.collapse { margin: 87px 0 0 22px; }

/* Formula bar */
.formula { flex: none; height: 54px; padding-top: 10px; display: grid; grid-template-columns: 106px 32px 115px 3px 1734px; padding-left: 5px; z-index: -1; }
.box { height: 33px; background: #fdfdfd; border: 1px solid #c6c6c6; display: flex; align-items: center; }
.name { justify-content: flex-end; padding-right: 6px; }
.formula .dots { margin: 10px 0 0 15px; }
.tools { justify-content: space-between; padding: 0 13px 1px 13px; }
.fx { font: italic 17px/20px "Liberation Serif", serif; }
.fx small { font-size: 12px; font-weight: bold; }
.value { grid-column: 5; font-size: 15px; font-weight: 300; justify-content: space-between; padding: 0 6px 5px 13px; color: #222; }
.formula .value .chev { margin-top: 4px; }

/* Worksheet */
.work { position: relative; flex: none; height: 809px; margin-top: -1px; display: flex; }
.sheet { width: 1978px; height: 809px; overflow: hidden; border-bottom: 1px solid #9b9b9b; border-right: 1px solid #9b9b9b; }
.colheads { display: flex; height: 26px; border-bottom: 1px solid #9b9b9b; background: #e6e6e6; font-size: 16px; line-height: 23px; color: #222; text-align: center; }
.colheads span { width: 75px; flex: none; border-right: 1px solid #c0c0c0; padding-left: 1px; }
.colheads .a { width: 307.500px; }
.colheads .corner { width: 30px; border-color: #b5b5b5; background: linear-gradient(135deg, transparent 50%, #b3b3b3 50%) 9px 5px / 17px 17px no-repeat; }
.cells { display: flex; background: #fff; height: 783px; }
.rownums { width: 30px; flex: none; background: #e6e6e6; border-right: 1px solid #9b9b9b; font-size: 16px; color: #333; text-align: center; }
.rownums div { height: 26.060px; line-height: 23px; border-bottom: 1px solid #b5b5b5; }
.col { width: 75px; flex: none; border-right: 1px solid #dcdcdc; }
.col div { height: 26.060px; border-bottom: 1px solid #d6d6d6; }
.col.a { width: 307.500px; }
.col .merged { height: 78.180px; display: flex; align-items: center; justify-content: center; font-size: 15.300px; color: #222; padding-bottom: 7px; font-feature-settings: normal; }
.vscroll { margin: 2px 0 0 3px; width: 15px; height: 808px; background: #dadada; display: flex; flex-direction: column; }
.vscroll span, .vscroll b, .hscroll span, .hscroll b { background: #fff; border: 1px solid #ababab; display: grid; place-items: center; }
.vscroll span { height: 15px; }
.vscroll b { height: 750px; margin-top: 1px; }
.vscroll .end { margin-top: auto; }

/* Shapes drawn over the sheet */
.ghost { position: absolute; background: rgba(233, 240, 237, .35); border: 1px solid rgba(215, 222, 219, .4); }
.ghost.one { left: 216px; top: 9px; width: 285px; height: 59px; }
.ghost.two-g { left: 216px; top: 83px; width: 275px; height: 614px; }
.brace { position: absolute; left: 337px; top: 25px; }
.note { position: absolute; left: 367px; top: 42px; font-size: 25px; line-height: 40px; font-weight: 700; color: #000; font-feature-settings: normal; }
.paste { position: absolute; left: 251px; top: 146px; width: 237px; height: 60px; background: #fff; padding: 6px 6px; color: #222; font-weight: 500; font-size: 12.500px; }
.opts { display: grid; grid-template-columns: repeat(6, 31.200px); margin-top: 10px; }
.opts svg { width: 24px; height: 26px; }
.chosen { background: #c4c4c4; width: 33px; height: 28px; padding-left: 7px; margin-left: -7px; }
.opts .f { font: italic bold 15px "Liberation Serif", serif; fill: #555; }
.redframe { position: absolute; left: 298px; top: 167px; width: 61px; height: 53px; border: 12px solid red; }
.caution { position: absolute; left: 126px; top: 279px; width: 483px; height: 153px; border: 2px solid red; color: red; font-weight: 700; font-size: 37.400px; line-height: 45px; padding: 3px 0 0 15px; font-feature-settings: normal; }
.caution .c { margin-left: 187px; }
.steps { position: absolute; left: 692px; top: 234px; width: 827px; height: 198px; background: #4472c4; border: 2px solid #2f528f; color: #fff; font-weight: 300; font-size: 37.400px; line-height: 45px; padding: 2px 0 0 14px; font-feature-settings: normal; }
.steps p { display: grid; grid-template-columns: 56px auto; }
.steps .last { grid-template-columns: 53px auto; }

/* Sheet tabs */
.sheetbar { flex: none; height: 30px; display: grid; align-items: center; padding-left: 28px; font: 15px "Noto Sans", sans-serif; grid-template-columns: 30px 46px 1px 75px 110px 910px 18px 760px; border-bottom: 1px solid #d0d0d0; }
.sheetbar > .tri { opacity: .35; }
.rule { width: 1px; height: 21px; background: #8f8f8f; }
.tab { height: 27px; display: flex; justify-content: center; align-items: center; align-self: start; padding-top: 1px; }
.cur { width: 76px; background: #fff; color: #217346; border-bottom: 2px solid #107240; border-right: 1px solid #9b9b9b; border-left: 1px solid #9b9b9b; padding-top: 2px; }
.hscroll { height: 15px; background: #dadada; display: flex; margin-top: 1px; width: 760px; }
.hscroll span { width: 15px; }
.hscroll b { width: 696px; }
.hscroll .end { margin-left: auto; }

/* Status bar */
.status { flex: none; height: 23px; background: #f3f2f1; display: grid; align-items: center; padding: 0 0 1px 7px; grid-template-columns: 1574px 100px 42px 42px 42px 150px 34px; font-size: 12.500px; word-spacing: 2px; }
.view { height: 23px; width: 42px; display: grid; place-items: center; }
.zoom { display: flex; align-items: center; gap: 5px; padding-left: 6px; }
.minus { width: 8px; height: 1px; background: #444; }
.track { width: 104px; height: 1px; background: #a5a5a5; display: flex; align-items: center; padding-left: 50px; }
.track b { width: 5px; height: 12px; background: #666; }

/* Taskbar */
.taskbar { flex: none; height: 42px; background: linear-gradient(90deg, #21373f, #20353f 45%, #1f3445 65%, #1a2a45 80%, #17263f); display: grid; grid-template-columns: 50px 358px 51px 48px 58px 46px 53px 50px 52px 50px 55px auto; align-items: center; }
.start, .app { height: 42px; display: grid; place-items: center; padding-bottom: 1px; }
.tsearch { height: 42px; background: #333; border: 1px solid #5b6063; color: #d8d8d8; display: flex; align-items: center; gap: 11px; padding: 0 0 2px 12px; font-size: 15px; }
.app.run { box-shadow: inset 0 -2px #a5d8f8; width: 42px; justify-self: center; }
.app.run.wide { width: 50px; background: #4b5f69; }
.app text { font: bold 11px "Noto Sans", sans-serif; fill: #fff; text-anchor: middle; }
.tray { height: 42px; display: grid; align-items: center; color: #fff; padding: 0 0 2px 820px; grid-template-columns: 81px 24px 28px 30px 17px 76px 30px; border-right: 1px solid #7c8795; width: 1125px; }
.battery { position: relative; width: 52px; height: 21px; border: 3px solid #fff; background: linear-gradient(90deg, #16a04a 38%, #000 38%); font: 14px/15px "Noto Sans", sans-serif; text-align: center; padding-left: 2px; }
.battery::after { content: ""; position: absolute; right: -5px; top: 3px; width: 3px; height: 9px; background: #fff; }
.ime { font: 21px/24px "Noto Sans", sans-serif; }
.clock { display: flex; flex-direction: column; align-items: center; gap: 3px; font: 12px/16px "Noto Sans", sans-serif; margin-left: -1px; }
.notif { position: relative; padding-left: 9px; }
.notif b { position: absolute; left: 17px; top: 6px; width: 17px; height: 17px; border-radius: 50%; background: #2d3035; border: 1px solid #888; font: bold 12px/15px "Noto Sans", sans-serif; text-align: center; }
```
FILE: script.js
```js
// Build the worksheet: column heads, row numbers and cells
const make = (cls, text) => {
  const d = document.createElement('div');
  if (cls) d.className = cls;
  if (text) d.textContent = text;
  return d;
};
const heads = document.getElementById('colheads');
const cells = document.getElementById('cells');
const nums = document.getElementById('rownums');
const names = ['田中一郎', '田中次郎', '田中三郎'];

for (let r = 1; r <= 31; r++) nums.append(make('', r <= 30 ? String(r) : ''));
[...'ABCDEFGHIJKLMNOPQRSTUVW'].forEach((letter) => {
  const h = document.createElement('span');
  h.textContent = letter;
  const col = make('col');
  if (letter === 'A') {
    h.className = 'a';
    col.classList.add('a');
    names.forEach((n) => col.append(make('merged', n)));
  }
  for (let r = letter === 'A' ? 10 : 1; r <= 31; r++) col.append(make());
  heads.append(h);
  cells.append(col);
});

// Tighten or loosen the tracking of a label to its design width
document.querySelectorAll('[data-w]').forEach((el) => {
  const range = document.createRange();
  range.selectNodeContents(el);
  const natural = range.getBoundingClientRect().width;
  const want = Number(el.dataset.w);
  el.style.letterSpacing = (want - natural) / el.textContent.length + 'px';
  el.style.width = want + 'px';
});
```
